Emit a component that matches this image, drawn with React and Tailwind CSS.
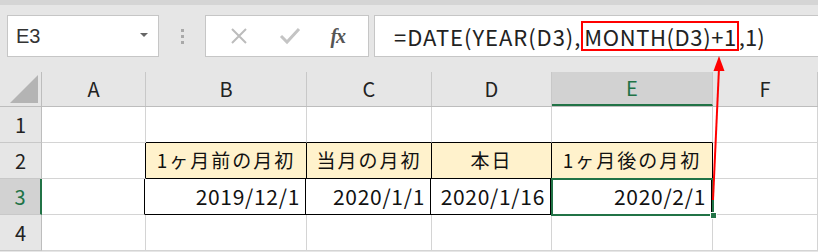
const cols = [
  { key: "A", w: "w-[104px]" },
  { key: "B", w: "w-[161px]" },
  { key: "C", w: "w-[125px]" },
  { key: "D", w: "w-[120px]" },
  { key: "E", w: "w-[161px]" },
  { key: "F", w: "flex-1" },
];

const font = "font-['Noto_Sans_CJK_JP','Noto_Sans',sans-serif]";

function ColHeader({ c }) {
  const active = c.key === "E";
  return (
    <div
      className={`${c.w} h-full flex items-center justify-center border-r border-[#c8c8c8] text-[20px] ${
        active ? "bg-[#d2d2d2] text-[#217346] border-b-2 border-b-[#217346]" : "text-[#222]"
      }`}
    >
      {c.key}
    </div>
  );
}

function Cell({ w, bg = "bg-white", br = "border-[#d4d4d4]", bb = "border-b-[#d4d4d4]", align = "justify-center", children }) {
  return (
    <div
      className={`${w} h-full flex items-center ${align} px-[5px] border-r border-b ${br} ${bb} ${bg} text-[19px] text-[#111] whitespace-nowrap`}
    >
      {children}
    </div>
  );
}

function Num({ children }) {
  return <span className="text-[21px] tracking-[0.7px]">{children}</span>;
}

function RowHead({ n, active }) {
  return (
    <div
      className={`w-[42px] h-full flex items-center justify-center border-b border-[#c8c8c8] text-[20px] ${
        active ? "bg-[#d2d2d2] text-[#217346] border-r-2 border-r-[#217346]" : "bg-[#e6e6e6] text-[#222] border-r border-r-[#bdbdbd]"
      }`}
    >
      {n}
    </div>
  );
}

export default function App() {
  const blk = "border-r-black";
  return (
    <div className={`relative w-[818px] h-[252px] bg-[#e6e6e6] overflow-hidden ${font}`}>
      <div className="h-[5px] bg-[#d5d5d5]" />
      {/* formula bar */}
      <div className="flex items-start h-[67px] pt-[10px] pl-[7px]">
        <div className="w-[152px] h-[42px] bg-white border border-[#c6c6c6] flex items-center justify-between pl-[8px] pr-[10px]">
          <span className="text-[20px] text-[#333] font-['Liberation_Sans',sans-serif]">E3</span>
          <span className="w-0 h-0 border-l-[4px] border-r-[4px] border-t-[4px] border-l-transparent border-r-transparent border-t-[#666] mb-[2px]" />
        </div>
        <div className="w-[46px] h-[42px] flex flex-col items-center justify-center gap-[3px]">
          <span className="w-[3px] h-[3px] bg-[#a9a9a9]" />
          <span className="w-[3px] h-[3px] bg-[#a9a9a9]" />
          <span className="w-[3px] h-[3px] bg-[#a9a9a9]" />
        </div>
        <div className="w-[164px] h-[42px] bg-white border border-[#c6c6c6] flex items-center justify-around px-[8px]">
          <svg width="20" height="20" viewBox="0 0 20 20">
            <path d="M3 3 L17 17 M17 3 L3 17" stroke="#bcbcbc" strokeWidth="2" />
          </svg>
          <svg width="22" height="20" viewBox="0 0 22 20">
            <path d="M2 10 L8 16 L20 3" stroke="#c4c4c4" strokeWidth="3" fill="none" />
          </svg>
          <span className="text-[20px] italic font-bold text-[#555] font-['Liberation_Serif',serif] tracking-[-1px]">fx</span>
        </div>
        <div className="ml-[5px] flex-1 h-[42px] bg-white border border-[#c6c6c6] border-r-0 flex items-center pl-[19px] text-[22px] text-[#222] whitespace-nowrap">
          <span className="tracking-[0.95px]">=DATE(YEAR(D3),</span>
          <span className="inline-block h-[30px] leading-[26px] border-2 border-[#ff0000] pl-[1px] tracking-[0.6px]">MONTH(D3)+1</span>
          <span className="tracking-[0px]">,1)</span>
        </div>
      </div>

      {/* column header */}
      <div className="flex h-[35px] bg-[#e6e6e6] border-b border-[#bdbdbd]">
        <div className="w-[42px] h-full border-r border-[#bdbdbd] flex items-end justify-end pr-[3px] pb-[3px]">
          <svg width="28" height="28" viewBox="0 0 28 28">
            <path d="M28 0 L28 28 L0 28 Z" fill="#b4b4b4" />
          </svg>
        </div>
        {cols.map((c) => (
          <ColHeader key={c.key} c={c} />
        ))}
      </div>

      {/* row 1 */}
      <div className="flex h-[36px]">
        <RowHead n="1" />
        <Cell w="w-[104px]" />
        <Cell w="w-[161px]" bb="border-b-black" />
        <Cell w="w-[125px]" bb="border-b-black" />
        <Cell w="w-[120px]" bb="border-b-black" />
        <Cell w="w-[161px]" bb="border-b-black" />
        <Cell w="flex-1" />
      </div>

      {/* row 2 */}
      <div className="flex h-[36px]">
        <RowHead n="2" />
        <Cell w="w-[104px]" br={blk} />
        <Cell w="w-[161px]" bg="bg-[#fff2cc]" br={blk} bb="border-b-black">
          <span className="tracking-[2px]">1ヶ月前の月初</span>
        </Cell>
        <Cell w="w-[125px]" bg="bg-[#fff2cc]" br={blk} bb="border-b-black">
          <span className="tracking-[2px]">当月の月初</span>
        </Cell>
        <Cell w="w-[120px]" bg="bg-[#fff2cc]" br={blk} bb="border-b-black">
          <span className="tracking-[2px]">本日</span>
        </Cell>
        <Cell w="w-[161px]" bg="bg-[#fff2cc]" br={blk} bb="border-b-black">
          <span className="tracking-[2px]">1ヶ月後の月初</span>
        </Cell>
        <Cell w="flex-1" />
      </div>

      {/* row 3 */}
      <div className="flex h-[36px]">
        <RowHead n="3" active />
        <Cell w="w-[103px]" br={blk} />
        <Cell w="w-[161px]" br={blk} bb="border-b-black" align="justify-end"><Num>2019/12/1</Num></Cell>
        <Cell w="w-[125px]" br={blk} bb="border-b-black" align="justify-end"><Num>2020/1/1</Num></Cell>
        <Cell w="w-[120px]" br={blk} bb="border-b-black" align="justify-end"><Num>2020/1/16</Num></Cell>
        <Cell w="w-[161px]" br={blk} bb="border-b-black" align="justify-end"><Num>2020/2/1</Num></Cell>
        <Cell w="flex-1" />
      </div>

      {/* row 4 */}
      <div className="flex h-[36px]">
        <RowHead n="4" />
        <Cell w="w-[104px]" />
        <Cell w="w-[161px]" />
        <Cell w="w-[125px]" />
        <Cell w="w-[120px]" />
        <Cell w="w-[161px]" />
        <Cell w="flex-1" />
      </div>

      {/* selection E3 */}
      <div className="absolute left-[551px] top-[178px] w-[163px] h-[38px] border-2 border-[#217346]" />
      <div className="absolute left-[710px] top-[212px] w-[7px] h-[7px] bg-[#217346] border border-white" />

      {/* arrow */}
      <svg className="absolute left-0 top-0" width="818" height="252">
        <line x1="713" y1="200" x2="719" y2="68" stroke="#ff0000" strokeWidth="2" />
        <path d="M719 56 L713.5 71 L724.5 71 Z" fill="#ff0000" />
      </svg>
    </div>
  );
}
